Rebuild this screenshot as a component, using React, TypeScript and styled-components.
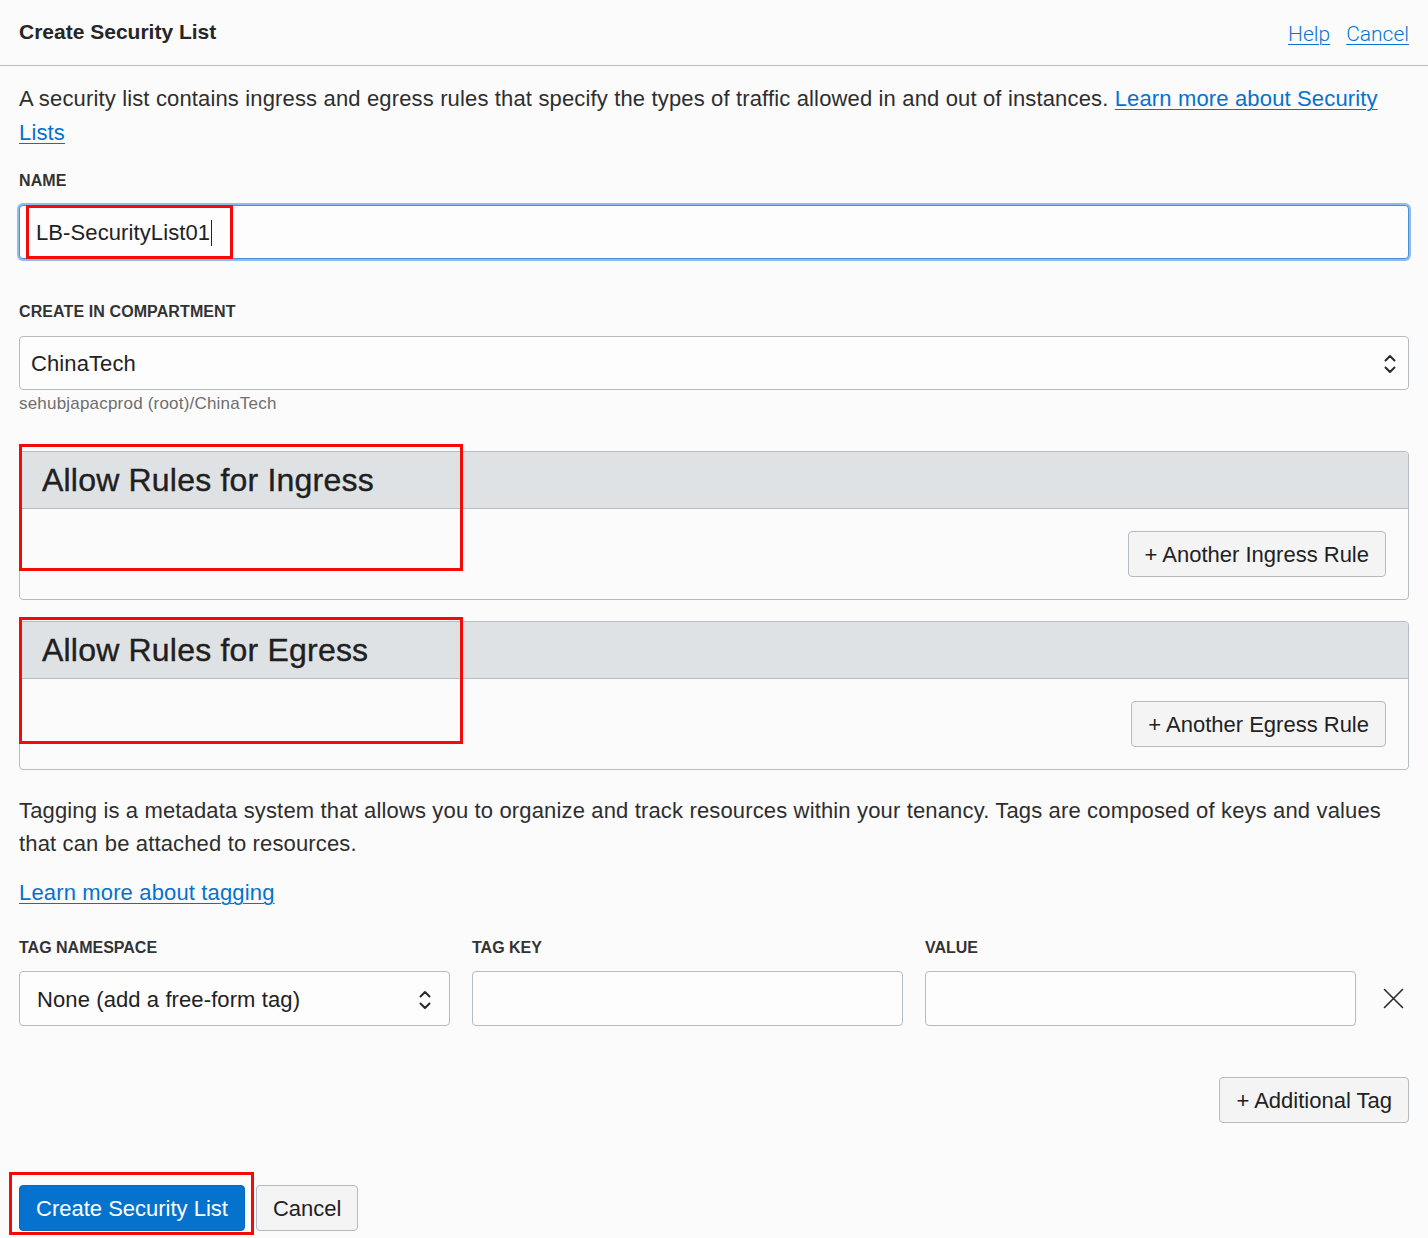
import React from "react";
import styled, { createGlobalStyle } from "styled-components";

const Global = createGlobalStyle`
  html, body { margin: 0; padding: 0; }
  body {
    background: #fbfbfb;
    font-family: "Liberation Sans", Arial, sans-serif;
    color: #2b2b2b;
  }
  * { box-sizing: border-box; }
`;

const Page = styled.div`
  width: 1428px;
  min-height: 1238px;
  background: #fbfbfb;
`;

const Header = styled.header`
  height: 66px;
  border-bottom: 1px solid #b9bcc1;
  display: flex;
  align-items: center;
  justify-content: space-between;
  padding: 0 19px 2px 19px;
`;

const Title = styled.h1`
  margin: 0;
  font-size: 21px;
  font-weight: 700;
  color: #262626;
`;

const HeaderLinks = styled.div`
  display: flex;
  gap: 16px;
  padding-top: 4px;
`;

const ThinLink = styled.a`
  font-family: Roboto, "Liberation Sans", sans-serif;
  font-weight: 300;
  font-size: 21px;
  color: #0a74d4;
  text-decoration: underline;
  text-underline-offset: 3px;
  text-decoration-thickness: 1px;
`;

const Content = styled.main`
  padding: 0 19px;
  display: flex;
  flex-direction: column;
`;

const Paragraph = styled.p<{ $top: number; $lh: number }>`
  margin: ${(p) => p.$top}px 0 0 0;
  font-size: 22px;
  letter-spacing: 0.15px;
  line-height: ${(p) => p.$lh}px;
  color: #2e2e2e;
`;

const Link = styled.a`
  color: #0572ce;
  text-decoration: underline;
  text-underline-offset: 3px;
  text-decoration-thickness: 1px;
`;

const LinkLine = styled.div`
  margin-top: 16px;
  font-size: 22px;
  letter-spacing: 0.15px;
  line-height: 34px;
`;

const Label = styled.label<{ $top: number }>`
  display: block;
  margin-top: ${(p) => p.$top}px;
  font-size: 16px;
  line-height: 20px;
  font-weight: 700;
  color: #333;
  letter-spacing: 0.1px;
`;

const FieldWrap = styled.div<{ $top: number }>`
  position: relative;
  margin-top: ${(p) => p.$top}px;
`;

const TextBox = styled.div<{ $focused?: boolean; $height: number; $pad: number }>`
  height: ${(p) => p.$height}px;
  background: #fdfdfd;
  border: 1px solid ${(p) => (p.$focused ? "#4a8fd6" : "#b6bac1")};
  border-radius: 4px;
  box-shadow: ${(p) => (p.$focused ? "0 0 0 2px #8fbcef" : "none")};
  display: flex;
  align-items: center;
  justify-content: space-between;
  padding: 2px ${(p) => p.$pad}px 0 ${(p) => p.$pad}px;
  font-size: 22px;
  letter-spacing: 0.1px;
  color: #222;
`;

const Caret = styled.span`
  display: inline-block;
  width: 1px;
  height: 26px;
  background: #222;
  margin-left: 1px;
`;

const InputText = styled.span`
  display: flex;
  align-items: center;
`;

const Helper = styled.div`
  margin-top: 4px;
  font-size: 17px;
  letter-spacing: 0.2px;
  line-height: 20px;
  color: #6e6e6e;
`;

const RedBox = styled.div<{ $l: number; $t: number; $w: number; $h: number }>`
  position: absolute;
  left: ${(p) => p.$l}px;
  top: ${(p) => p.$t}px;
  width: ${(p) => p.$w}px;
  height: ${(p) => p.$h}px;
  border: 3px solid #f50a0a;
  pointer-events: none;
`;

const Panel = styled.section<{ $top: number }>`
  position: relative;
  margin-top: ${(p) => p.$top}px;
  border: 1px solid #b9bdc3;
  border-radius: 4px;
  background: #fbfbfb;
`;

const PanelHeader = styled.div`
  height: 57px;
  background: #dfe2e5;
  border-bottom: 1px solid #b9bdc3;
  border-radius: 3px 3px 0 0;
  display: flex;
  align-items: center;
  padding: 0 22px 0 22px;
`;

const PanelTitle = styled.h2`
  margin: 0;
  font-size: 32px;
  font-weight: 400;
  letter-spacing: 0.2px;
  -webkit-text-stroke: 0.4px #1f1f1f;
  color: #1f1f1f;
`;

const PanelBody = styled.div`
  display: flex;
  justify-content: flex-end;
  padding: 22px 22px 22px 22px;
`;

const SecondaryButton = styled.button`
  height: 46px;
  padding: 2px 16px 0 16px;
  background: #f4f4f5;
  border: 1px solid #b6bac1;
  border-radius: 4px;
  font-family: "Liberation Sans", Arial, sans-serif;
  font-size: 22px;
  color: #222;
  cursor: pointer;
`;

const PrimaryButton = styled.button`
  height: 46px;
  padding: 2px 16px 0 16px;
  background: #0572ce;
  border: 1px solid #0468bd;
  border-radius: 4px;
  font-family: "Liberation Sans", Arial, sans-serif;
  font-size: 22px;
  color: #fff;
  cursor: pointer;
`;

const TagGrid = styled.div`
  margin-top: 28px;
  display: grid;
  grid-template-columns: 431px 431px 431px 1fr;
  column-gap: 22px;
  row-gap: 13px;
  align-items: center;
`;

const TagLabel = styled.div`
  font-size: 16px;
  line-height: 20px;
  font-weight: 700;
  color: #333;
`;

const TagBox = styled.div<{ $pad?: number }>`
  height: 55px;
  background: #fdfdfd;
  border: 1px solid #b6bac1;
  border-radius: 4px;
  display: flex;
  align-items: center;
  justify-content: space-between;
  padding: 2px ${(p) => p.$pad ?? 17}px 0 ${(p) => p.$pad ?? 17}px;
  font-size: 22px;
  letter-spacing: 0.1px;
  color: #222;
`;

const RemoveCell = styled.div`
  display: flex;
  justify-content: flex-end;
  padding-right: 5px;
`;

const RightRow = styled.div`
  margin-top: 51px;
  display: flex;
  justify-content: flex-end;
`;

const Footer = styled.div`
  margin-top: 62px;
  display: flex;
  gap: 11px;
  padding-bottom: 7px;
`;

const ButtonWrap = styled.div`
  position: relative;
`;

const Chevrons = () => (
  <svg width="14" height="24" viewBox="0 0 14 24" fill="none">
    <path d="M2.5 8.5 L7 4 L11.5 8.5" stroke="#2a2a2a" strokeWidth="2" strokeLinecap="round" strokeLinejoin="round" />
    <path d="M2.5 15.5 L7 20 L11.5 15.5" stroke="#2a2a2a" strokeWidth="2" strokeLinecap="round" strokeLinejoin="round" />
  </svg>
);

const CloseIcon = () => (
  <svg width="21" height="21" viewBox="0 0 21 21" fill="none">
    <path d="M1.5 1.5 L19.5 19.5 M19.5 1.5 L1.5 19.5" stroke="#2a2a2a" strokeWidth="1.6" strokeLinecap="round" />
  </svg>
);

export default function App() {
  return (
    <Page>
      <Global />
      <Header>
        <Title>Create Security List</Title>
        <HeaderLinks>
          <ThinLink href="#">Help</ThinLink>
          <ThinLink href="#">Cancel</ThinLink>
        </HeaderLinks>
      </Header>
      <Content>
        <Paragraph $top={16} $lh={34}>
          A security list contains ingress and egress rules that specify the types of traffic allowed in and out of instances.{" "}
          <Link href="#">Learn more about Security Lists</Link>
        </Paragraph>

        <Label $top={21}>NAME</Label>
        <FieldWrap $top={14}>
          <TextBox $focused $height={54} $pad={16}>
            <InputText>
              LB-SecurityList01
              <Caret />
            </InputText>
          </TextBox>
          <RedBox $l={7} $t={0} $w={207} $h={54} />
        </FieldWrap>

        <Label $top={43}>CREATE IN COMPARTMENT</Label>
        <FieldWrap $top={14}>
          <TextBox $height={54} $pad={11}>
            <span>ChinaTech</span>
            <Chevrons />
          </TextBox>
        </FieldWrap>
        <Helper>sehubjapacprod (root)/ChinaTech</Helper>

        <Panel $top={37}>
          <PanelHeader>
            <PanelTitle>Allow Rules for Ingress</PanelTitle>
          </PanelHeader>
          <PanelBody>
            <SecondaryButton>+ Another Ingress Rule</SecondaryButton>
          </PanelBody>
          <RedBox $l={-1} $t={-8} $w={444} $h={127} />
        </Panel>

        <Panel $top={21}>
          <PanelHeader>
            <PanelTitle>Allow Rules for Egress</PanelTitle>
          </PanelHeader>
          <PanelBody>
            <SecondaryButton>+ Another Egress Rule</SecondaryButton>
          </PanelBody>
          <RedBox $l={-1} $t={-5} $w={444} $h={127} />
        </Panel>

        <Paragraph $top={24} $lh={33}>
          Tagging is a metadata system that allows you to organize and track resources within your tenancy. Tags are composed of keys and values that can be attached to resources.
        </Paragraph>
        <LinkLine>
          <Link href="#">Learn more about tagging</Link>
        </LinkLine>

        <TagGrid>
          <TagLabel>TAG NAMESPACE</TagLabel>
          <TagLabel>TAG KEY</TagLabel>
          <TagLabel>VALUE</TagLabel>
          <div />
          <TagBox>
            <span>None (add a free-form tag)</span>
            <Chevrons />
          </TagBox>
          <TagBox />
          <TagBox />
          <RemoveCell>
            <CloseIcon />
          </RemoveCell>
        </TagGrid>

        <RightRow>
          <SecondaryButton>+ Additional Tag</SecondaryButton>
        </RightRow>

        <Footer>
          <ButtonWrap>
            <PrimaryButton>Create Security List</PrimaryButton>
            <RedBox $l={-10} $t={-13} $w={245} $h={63} />
          </ButtonWrap>
          <SecondaryButton>Cancel</SecondaryButton>
        </Footer>
      </Content>
    </Page>
  );
}
